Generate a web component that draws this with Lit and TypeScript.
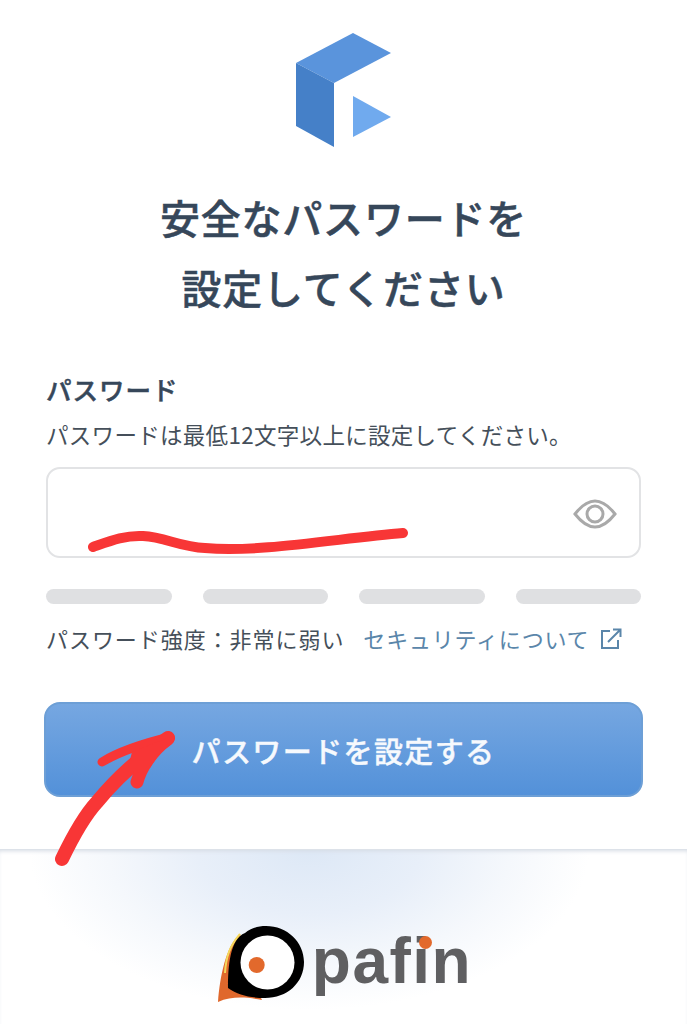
import { LitElement, html, css } from 'lit';
import { customElement } from 'lit/decorators.js';

@customElement('app-root')
export class AppRoot extends LitElement {
  static styles = css`
    :host {
      display: block;
      position: relative;
      width: 687px;
      height: 1024px;
      overflow: hidden;
      background: #fff;
      font-family: 'Noto Sans CJK JP', 'Noto Sans', sans-serif;
      color: #36475a;
    }
    .main {
      display: flex;
      flex-direction: column;
      padding: 33px 46px 0;
    }
    .brand {
      display: block;
      align-self: center;
      width: 96px;
      height: 114px;
    }
    h1 {
      margin: 35px 0 0;
      font-size: 40px;
      line-height: 70px;
      font-weight: 500;
      -webkit-text-stroke: 0.5px #36475a;
      letter-spacing: 0.8px;
      text-align: center;
    }
    .label {
      margin-top: 49px;
      font-size: 25.500px;
      line-height: 36px;
      font-weight: 500;
      -webkit-text-stroke: 0.5px #36475a;
      letter-spacing: 1px;
    }
    .help {
      margin-top: 10px;
      font-size: 22.500px;
      line-height: 34px;
      letter-spacing: 0.3px;
      white-space: nowrap;
      color: #454f5a;
    }
    .field {
      display: flex;
      align-items: center;
      justify-content: flex-end;
      box-sizing: border-box;
      margin-top: 16px;
      height: 91px;
      padding-right: 22px;
      background: #fff;
      border: 2px solid #e2e3e5;
      border-radius: 14px;
    }
    .eye {
      width: 44px;
      height: 30px;
      margin-top: 3px;
    }
    .meter {
      display: grid;
      grid-template-columns: repeat(4, 1fr);
      gap: 31px;
      margin-top: 31px;
    }
    .meter span {
      height: 15px;
      border-radius: 8px;
      background: #dfe0e2;
    }
    .strength {
      display: flex;
      align-items: center;
      margin-top: 17px;
      font-size: 22px;
      line-height: 34px;
      white-space: nowrap;
      color: #454f5a;
    }
    .strength .value {
      letter-spacing: 0.95px;
    }
    .link {
      display: flex;
      align-items: center;
      margin-left: 19px;
      color: #5a86aa;
      letter-spacing: 0.8px;
    }
    .link svg {
      width: 22px;
      height: 22px;
      margin: 2px 0 0 11px;
    }
    button {
      display: block;
      box-sizing: border-box;
      margin: 47px -2px 0;
      height: 95px;
      padding: 2px 0 0;
      border: 2px solid #6d9fd6;
      border-radius: 16px;
      background: linear-gradient(#76a7e1, #5391d9);
      color: #f6f9fd;
      font: 500 29px/1 'Noto Sans CJK JP', 'Noto Sans', sans-serif;
      -webkit-text-stroke: 0.4px #f6f9fd;
      letter-spacing: 1.4px;
    }
    .footer {
      display: flex;
      justify-content: center;
      box-sizing: border-box;
      height: 176px;
      margin-top: 52px;
      padding: 71px 0 0 0;
      border-top: 1px solid #dde2e9;
      box-shadow: inset 0 3px 4px -2px #d5dbe4;
      background: radial-gradient(ellipse 280px 160px at 45% 0, #dde8f6 0%, #e8eff9 40%, #f5f8fc 72%, #fff 100%);
    }
    .logo {
      display: flex;
      align-items: flex-start;
      position: relative;
    }
    .mark {
      display: block;
      width: 90px;
      height: 85px;
    }
    .name {
      margin: 9px 0 0 7px;
      font-family: 'Liberation Sans', sans-serif;
      font-size: 64px;
      line-height: 62px;
      font-weight: 700;
      letter-spacing: 1.500px;
      color: #5f5f61;
    }
    .dot {
      position: absolute;
      left: 204px;
      top: 15px;
      width: 13px;
      height: 13px;
      border-radius: 50%;
      background: #e2692c;
    }
    .marks {
      position: absolute;
      left: 0;
      top: 0;
      width: 687px;
      height: 1024px;
      pointer-events: none;
    }
  `;

  render() {
    return html`
      <div class="main">
        <svg class="brand" viewBox="296 33 96 114">
          <polygon points="296,63 353,33 391,53 334,83" fill="#5a94dc" />
          <polygon points="296,63 334,83 334,147 296,126" fill="#4580c8" />
          <polygon points="353,96 391,117 353,137" fill="#70aaee" />
        </svg>
        <h1>安全なパスワードを<br />設定してください</h1>
        <div class="label">パスワード</div>
        <div class="help">パスワードは最低12文字以上に設定してください。</div>
        <div class="field">
          <svg class="eye" viewBox="0 0 44 30" fill="none" stroke="#a9a9a9" stroke-width="3">
            <path d="M2 15C9 6 15 2 22 2s13 4 20 13c-7 9-13 13-20 13S9 24 2 15z" />
            <circle cx="22" cy="15" r="8" />
          </svg>
        </div>
        <div class="meter"><span></span><span></span><span></span><span></span></div>
        <div class="strength">
          <span class="value">パスワード強度：非常に弱い</span>
          <span class="link">
            セキュリティについて
            <svg viewBox="0 0 22 22" fill="none" stroke="#5a86aa" stroke-width="2">
              <path d="M10 3H2v17h16v-8" />
              <path d="M8 14L20 2M13 1.500h7.500V9" />
            </svg>
          </span>
        </div>
        <button>パスワードを設定する</button>
      </div>
      <div class="footer">
        <div class="logo">
          <svg class="mark" viewBox="215 920 90 85">
            <path d="M240 933C226 945 220 975 218 1001C232 995 246 996 262 999L250 975z" fill="#e0682c" />
            <path d="M240 933C230 945 226 955 225 972" fill="none" stroke="#f5d85c" stroke-width="2" />
            <path d="M266 925C287 925 304 941 304 961C304 982 287 997 265 997C250 997 238 994 228 987C228 965 230 938 245 932C251 927 258 925 266 925z" fill="#000" />
            <circle cx="267.500" cy="961.500" r="27" fill="#fff" />
            <circle cx="256.700" cy="964" r="8" fill="#e2692c" />
          </svg>
          <span class="name">pafin</span>
          <span class="dot"></span>
        </div>
      </div>
      <svg class="marks" viewBox="0 0 687 1024" fill="none" stroke="#f83636" stroke-linecap="round" stroke-linejoin="round">
        <path d="M93 547C110 541 125 535 143 536C165 537 180 547 205 548C260 553 340 538 403 533" stroke-width="10" />
        <path d="M62 859C75 832 85 815 97 802C115 780 140 757 168 738" stroke-width="14" />
        <path d="M102 762C120 751 145 743 170 737" stroke-width="9" />
        <path d="M137 782C140 770 150 752 168 739" stroke-width="13" />
        <polygon points="132,752 170,737 150,768 128,768" fill="#f83636" stroke="none" />
      </svg>
    `;
  }
}
